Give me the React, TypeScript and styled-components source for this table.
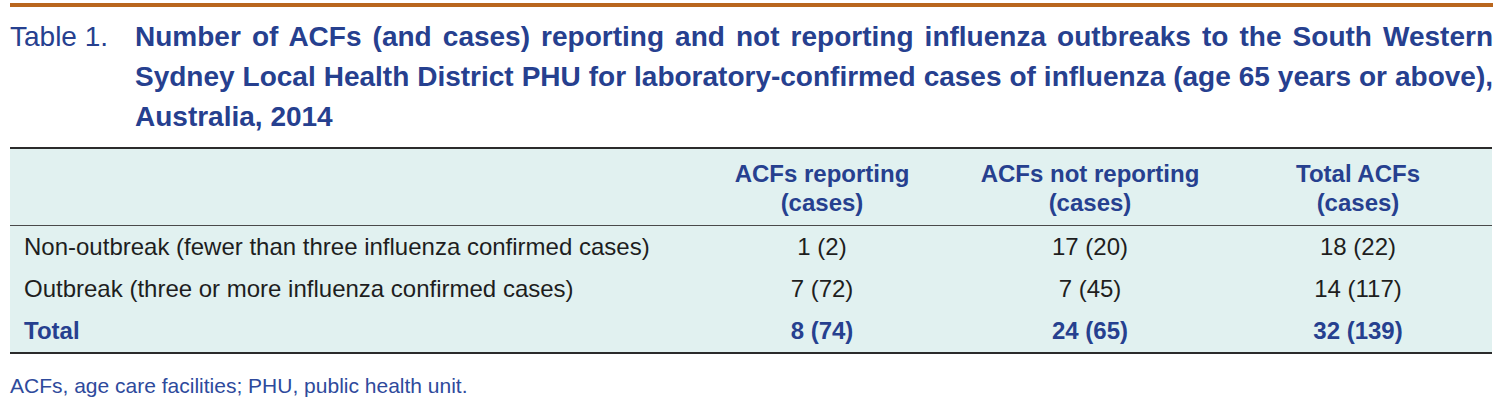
import React from 'react'
import styled, { createGlobalStyle } from 'styled-components'

const GlobalStyle = createGlobalStyle`
  body {
    margin: 0;
    background: #fff;
    font-family: "Liberation Sans", Arial, sans-serif;
  }
`

const blue = '#26408f'

const rows = [
  { label: 'Non-outbreak (fewer than three influenza confirmed cases)', values: ['1 (2)', '17 (20)', '18 (22)'] },
  { label: 'Outbreak (three or more influenza confirmed cases)', values: ['7 (72)', '7 (45)', '14 (117)'] },
  { label: 'Total', values: ['8 (74)', '24 (65)', '32 (139)'], total: true },
]

const titleLines = [
  'Number of ACFs (and cases) reporting and not reporting influenza outbreaks to the South Western',
  'Sydney Local Health District PHU for laboratory-confirmed cases of influenza (age 65 years or above),',
  'Australia, 2014',
]

const App = () => {
  return (
    <Page>
      <GlobalStyle />
      <TopRule />
      <Caption>
        <CaptionLabel>Table 1.</CaptionLabel>
        <CaptionTitle>
          {titleLines.map((line, i) => (
            <TitleLine key={i} last={i === titleLines.length - 1}>{line}</TitleLine>
          ))}
        </CaptionTitle>
      </Caption>

      <Table>
        <HeaderRow>
          <div />
          <HeadCell>ACFs reporting<br />(cases)</HeadCell>
          <HeadCell>ACFs not reporting<br />(cases)</HeadCell>
          <HeadCell>Total ACFs<br />(cases)</HeadCell>
        </HeaderRow>
        {rows.map(row => (
          <Row key={row.label} total={row.total}>
            <LabelCell>{row.label}</LabelCell>
            {row.values.map((v, i) => (
              <ValueCell key={i}>{v}</ValueCell>
            ))}
          </Row>
        ))}
      </Table>

      <Footnote>ACFs, age care facilities; PHU, public health unit.</Footnote>
    </Page>
  )
}

const Page = styled.div`
  padding: 3px 7px 0 10px;
  width: 1483px;
`

const TopRule = styled.div`
  height: 4px;
  background-color: #b9661d;
`

const Caption = styled.div`
  display: flex;
  margin-top: 10px;
  color: ${blue};
  font-size: 28px;
  line-height: 40px;
`

const CaptionLabel = styled.div`
  width: 125px;
  flex-shrink: 0;
  font-weight: 400;
`

const CaptionTitle = styled.div`
  flex: 1;
  font-weight: 700;
`

const TitleLine = styled.div<{ last?: boolean }>`
  text-align: justify;
  text-align-last: ${({ last }) => (last ? 'left' : 'justify')};
  white-space: nowrap;
`

const Table = styled.div`
  margin-top: 10px;
  border-top: 2px solid #2b2b2b;
  border-bottom: 2px solid #2b2b2b;
  background-color: #e1f1f0;
  width: 1482px;
`

const grid = `
  display: grid;
  grid-template-columns: 1fr 268px 268px 268px;
  align-items: center;
`

const HeaderRow = styled.div`
  ${grid}
  height: 77px;
  border-bottom: 1px solid #4a4a4a;
  box-sizing: border-box;
  padding-top: 2px;
`

const HeadCell = styled.div`
  text-align: center;
  color: ${blue};
  font-weight: 700;
  font-size: 24px;
  line-height: 29px;
`

const Row = styled.div<{ total?: boolean }>`
  ${grid}
  height: 42px;
  font-size: 24px;
  color: ${({ total }) => (total ? blue : '#1e1e1e')};
  font-weight: ${({ total }) => (total ? 700 : 400)};
`

const LabelCell = styled.div`
  padding-left: 14px;
`

const ValueCell = styled.div`
  text-align: center;
`

const Footnote = styled.div`
  margin-top: 20px;
  color: #2e4a9c;
  font-size: 21px;
  line-height: 24px;
`

export default App
